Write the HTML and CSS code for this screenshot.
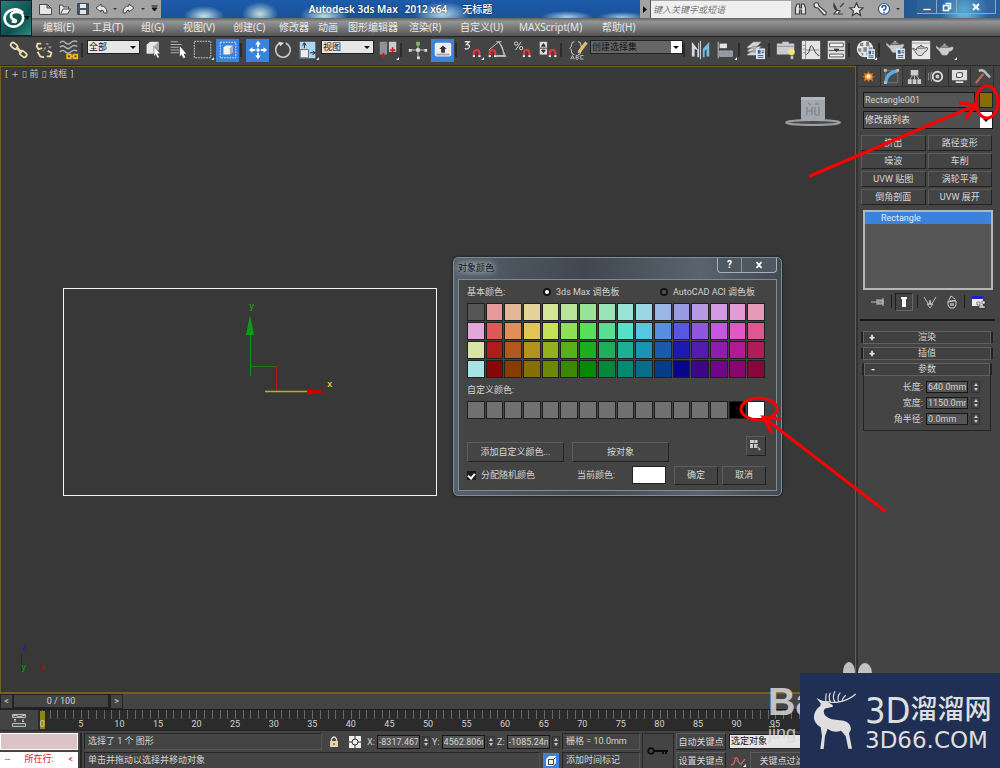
FILE: index.html
```html
<!DOCTYPE html>
<html lang="zh-CN">
<head>
<meta charset="utf-8">
<title>Autodesk 3ds Max 2012 x64 无标题</title>
<link rel="stylesheet" href="styles.css">
</head>
<body>
<svg class="defs" aria-hidden="true">
  <symbol id="magnet" viewBox="0 0 10 10"><path d="M2 9V5a3 3 0 0 1 6 0v4" fill="none" stroke="#e23b3b" stroke-width="2.4"/><path d="M.8 8.8h2.4M6.8 8.8h2.4" stroke="#eee" stroke-width="2"/></symbol>
  <symbol id="teapot" viewBox="0 0 20 14"><path d="M4 5h10q5-2 4 1-1 3-4 3-1 3-3 4H7Q5 12 4 9L0 5V3l4 3zM5 4q4-3 8 0zM8 1h2v2H8z" fill="#c9ced3" stroke="#777" stroke-width=".5"/></symbol>
  <symbol id="panelmark" viewBox="0 0 10 12"><path d="M0 0h10v12H0z" fill="#dde6f0"/><path d="M2 2h3v4H2z" fill="#2968b3"/><path d="M6 3h3M6 5h3M2 8h6M2 10h6" stroke="#456" stroke-width="1"/></symbol>
</svg>
<div class="app">
  <header class="top">
    <button class="app-logo" aria-label="应用程序">
      <svg width="31" height="32" viewBox="0 0 31 32"><path d="M22 11Q16 5 8 9 1 14 5 21q4 5 11 3 7-3 6-10-1-4-6-4-6 0-6 4 0 3 4 4 2 1 0 2-2 0-3-1" fill="none" stroke="#fff" stroke-width="2.600"/><path d="M23 14h6l-3 4z" fill="#031512"/></svg>
    </button>
    <div class="titlebar">
      <div class="quick">
        <svg width="129" height="18" viewBox="0 0 129 18" fill="#e5e7e8" stroke="#44494e" stroke-width="1"><path d="M7.500 4.500h8l4 4v6h-12zM15 4v4h4"/><path d="M27.500 13V5h3l1 2h5v2h2l-3 5h-8zM29 13l2-4h6"/><path d="M45.500 3.500h11v11h-11z" fill="#40566c"/><path d="M48 4h6v4h-6zM48 10h6v4h-6z" stroke="none"/><path d="M64 8l5-4v2q6 0 6 7h-3q0-3-3-3v2z"/><path d="M102 8l-5-4v2q-6 0-6 7h3q0-3 3-3v2z"/><path d="M81 8h4l-2 2zM109 8h4l-2 2z" fill="#333" stroke="none"/><path d="M120 8h5l-2.500 3zM119.500 6h6" fill="#111" stroke="#111"/></svg>
      </div>
      <h1 class="title"><span>Autodesk 3ds Max</span><span>2012 x64</span><span class="docname">无标题</span></h1>
      <div class="infocenter">
        <button class="info-toggle" aria-label="展开"><svg width="5" height="7" viewBox="0 0 5 7"><path d="M0 0l4 3.500L0 7z" fill="#111"/></svg></button>
        <input class="search" type="text" placeholder="键入关键字或短语" aria-label="搜索">
        <svg class="info-icons" width="113" height="18" viewBox="0 0 113 18" fill="#e6e6e6" stroke="#3c3f42" stroke-width="1.200"><path d="M4.500 14V8l1.500-4h2.500v4h2V4H13l1.500 4v6h-4v-4h-2v4z"/><path d="M23 5q0-3 4-2l1 3 7 6q1 3-2 3l-6-7q-4 0-4-3z"/><path d="M43 4q-1 6 6 7l-2 3h-4l3-4zM49 7l4-4M44 14h8"/><path d="M65.500 3l2 4.500 4.500.500-3.500 3 1 4.500-4-2.500-4 2.500 1-4.500-3.500-3 4.500-.500z"/><circle cx="93" cy="9" r="5.500" fill="#fff" stroke="#3b5578"/><path d="M91 8q0-2.500 2-2.500T95 8q0 1-2 2v1M93 12v1.500" fill="none" stroke="#1d54a8" stroke-width="1.500"/><path d="M105 8h4l-2 2z" fill="#333" stroke="none"/></svg>
      </div>
      <div class="winbuttons">
        <button aria-label="最小化"><svg width="10" height="12" viewBox="0 0 10 12"><path d="M1 7.500h8v2H1z" fill="#fff" stroke="#445" stroke-width=".5"/></svg></button>
        <button aria-label="还原"><svg width="10" height="12" viewBox="0 0 10 12"><path d="M3.500 2.500h5v5h-2M1.500 4.500h5v5h-5z" fill="none" stroke="#fff" stroke-width="1.500"/></svg></button>
        <button class="wide" aria-label="关闭"><svg width="10" height="12" viewBox="0 0 10 12"><path d="M2 3l6 6M8 3L2 9" stroke="#fff" stroke-width="2"/></svg></button>
      </div>
    </div>
    <nav class="menubar">
      <button>编辑(E)</button><button>工具(T)</button><button>组(G)</button><button>视图(V)</button><button>创建(C)</button><button>修改器</button><button>动画</button><button>图形编辑器</button><button>渲染(R)</button><button>自定义(U)</button><button>MAXScript(M)</button><button>帮助(H)</button>
    </nav>
  </header>

  <div class="toolbar" role="toolbar">
    <button class="tool" aria-label="选择并链接"><svg viewBox="0 0 24 24"><g fill="none" stroke="#e9d9ae" stroke-width="2"><rect x="3" y="5" width="8" height="5" rx="2.500" transform="rotate(40 7 7)"/><rect x="13" y="14" width="8" height="5" rx="2.500" transform="rotate(40 17 16)"/><path d="M9 9l6 6" stroke-width="3"/></g></svg></button>
    <button class="tool" aria-label="取消链接"><svg viewBox="0 0 24 24"><g fill="none" stroke-width="2"><path d="M10 10L6 11 4 8l1-3 4 0" stroke="#e9d9ae"/><path d="M5 14l3 5 4 1M15 19l4 0 1-4-4-2" stroke="#e9d9ae"/><path d="M14 5l4 1M17 9l3 0M14 9l-3 4" stroke="#8f8f8f" stroke-dasharray="3 1"/></g></svg></button>
    <button class="tool" aria-label="绑定到空间扭曲"><svg viewBox="0 0 24 24"><path d="M2 4q3-3 6 0t6 0 7-1M2 9q3-3 6 0t6 0 7-1M2 14q3-3 6 0t6 0 7-1" fill="none" stroke="#aeb1b4" stroke-width="1.600"/><path d="M10 17h4v4h-4zM17 17h4v4h-4zM13 19h4" fill="none" stroke="#eeb11f" stroke-width="2"/></svg></button>
    <i class="sep"></i>
    <span class="combo"><select aria-label="选择过滤器"><option>全部</option></select></span>
    <button class="tool" aria-label="选择对象"><svg viewBox="0 0 24 24"><path d="M5 6l4-3h9v9l-4 4H5z" fill="#e4e6e8"/><path d="M14 7l4-4v9l-4 4z" fill="#a9adb2"/><path d="M13 8l7 8h-3l2 4-2 1-2-4-2 2z" fill="#fff" stroke="#333" stroke-width=".5"/></svg></button>
    <button class="tool" aria-label="按名称选择"><svg viewBox="0 0 24 24"><path d="M4 3h8M4 6h12M4 9h9M4 12h9M4 15h9" stroke="#b9b9b9"/><path d="M14 8l7 8h-3l2 4-2 1-2-4-2 2z" fill="#fff"/></svg></button>
    <button class="tool" aria-label="矩形选择区域"><svg viewBox="0 0 24 24"><path d="M2.500 2.500h18v18h-18z" fill="none" stroke="#d5d5d5" stroke-dasharray="2 1"/><path d="M24 20v3h-3z" fill="#fff"/></svg></button>
    <button class="tool on" aria-label="窗口/交叉"><svg viewBox="0 0 24 24"><path d="M3.500 3.500h17v17h-17z" fill="none" stroke="#dceaff" stroke-dasharray="2 1"/><path d="M7 9l3-2h7v8l-3 2H7z" fill="#f0f0ec"/><path d="M14 10l3-3v8l-3 2z" fill="#aaa"/></svg></button>
    <i class="sep"></i>
    <button class="tool on" aria-label="选择并移动"><svg viewBox="0 0 24 24"><g fill="#fff"><path d="M12 2l3 4h-2v3h-2V6H9zM12 22l3-4h-2v-3h-2v3H9zM2 12l4-3v2h3v2H6v2zM22 12l-4-3v2h-3v2h3v2z"/><circle cx="12" cy="12" r="1.800"/></g></svg></button>
    <button class="tool" aria-label="选择并旋转"><svg viewBox="0 0 24 24"><path d="M8 5a8 8 0 1 0 7-.500" fill="none" stroke="#c5c5c5" stroke-width="1.800"/><path d="M7 3l6 1-4 4z" fill="#ddd"/></svg></button>
    <button class="tool" aria-label="选择并缩放"><svg viewBox="0 0 24 24"><path d="M3 3h17v18H3z" fill="#a9d8f2"/><path d="M3.500 11.500h9v9h-9z" fill="#eee" stroke="#666"/><path d="M8 10V5M6 7l2-3 2 3M14 15h5M17 13l3 2-3 2" stroke="#112" fill="none"/><path d="M24 20v3h-3z" fill="#fff"/></svg></button>
    <span class="combo gap"><select aria-label="参考坐标系"><option>视图</option></select></span>
    <button class="tool" aria-label="使用轴点中心"><svg viewBox="0 0 24 24"><path d="M3 3h8v14H3z" fill="#8d9299"/><path d="M13 3h8v11h-8z" fill="#c9cdd2"/><path d="M7 15v6M4 18h6M17 9v6M14 12h6" stroke="#d11" stroke-width="1.800"/><path d="M24 20v3h-3z" fill="#fff"/></svg></button>
    <i class="sep"></i>
    <button class="tool" aria-label="选择并操纵"><svg viewBox="0 0 24 24"><path d="M12 4v17M3 12h18" stroke="#ccc"/><path d="M10 10h4v4h-4zM2 11h3v3H2zM19 11h3v3h-3zM11 19h3v3h-3z" fill="#ddd"/><path d="M10 3h4v4h-4z" fill="#7bc25e"/></svg></button>
    <button class="tool on" aria-label="键盘快捷键覆盖切换"><svg viewBox="0 0 24 24"><rect x="3" y="4" width="18" height="15" rx="2" fill="#f1eeea"/><path d="M5 16h14v2H5z" fill="#a5a5a5"/><path d="M12 7l4 4h-2v4h-4v-4H8z" fill="#333"/></svg></button>
    <i class="sep"></i>
    <button class="tool" aria-label="捕捉开关"><svg viewBox="0 0 24 24"><path d="M3 3h5l-3 3q4 0 3 3-2 3-5 1" fill="none" stroke="#ddd" stroke-width="1.400"/><use href="#magnet" x="11" y="10" width="10" height="10"/><path d="M24 20v3h-3z" fill="#fff"/></svg></button>
    <button class="tool" aria-label="角度捕捉"><svg viewBox="0 0 24 24"><path d="M2 12L13 3l7 15H10M12 3q6 4 6 14M10 3h6M8 19h13" fill="none" stroke="#ccc"/><use href="#magnet" x="1" y="10" width="10" height="10"/></svg></button>
    <button class="tool" aria-label="百分比捕捉"><svg viewBox="0 0 24 24"><path d="M10 3L4 12" stroke="#ddd"/><circle cx="4.500" cy="5" r="1.800" fill="none" stroke="#ddd"/><circle cx="10" cy="10" r="1.800" fill="none" stroke="#ddd"/><use href="#magnet" x="11" y="10" width="10" height="10"/></svg></button>
    <button class="tool" aria-label="微调器捕捉"><svg viewBox="0 0 24 24"><path d="M3 3h8v14H3z" fill="#ddd"/><path d="M5 8l2-3 2 3zM5 12l2 3 2-3zM3 10h8" fill="#333" stroke="#333"/><use href="#magnet" x="12" y="10" width="10" height="10"/></svg></button>
    <i class="sep"></i>
    <button class="tool" aria-label="编辑命名选择集"><svg viewBox="0 0 24 24"><path d="M8 3q-3 0-3 3t-2 4q2 1 2 4t3 3M12 3q3 0 3 3t2 4q-2 1-2 4t-3 3" fill="none" stroke="#ddd"/><path d="M4 22l2-4 2 4M5 21h2M10 18v4h2l1-1-1-1 1-1-1-1zM10 20h2M18 18h-3v4h3" fill="none" stroke="#ddd" stroke-width=".8"/><path d="M20 3l2 2-7 9-3 1 1-3z" fill="#f3ba45" stroke="#fff" stroke-width=".5"/></svg></button>
    <span class="combo sets"><select aria-label="命名选择集"><option>创建选择集</option></select></span>
    <i class="sep"></i>
    <button class="tool" aria-label="镜像"><svg viewBox="0 0 24 24"><path d="M2 3l7 9V4h1v16H8V12l-3-1v8H2z" fill="#d5dae0"/><path d="M21 3l-7 8v9h2v-7l2-2v8h3z" fill="#73bce5"/><path d="M11.500 2v20" stroke="#ddd"/></svg></button>
    <button class="tool" aria-label="对齐"><svg viewBox="0 0 24 24"><path d="M3.500 3v18" stroke="#ccc"/><path d="M5 5h8v5H5z" fill="#e5e5e5"/><path d="M5 13h14v6H5z" fill="#8f98a6" stroke="#bbb" stroke-width=".7"/><path d="M24 20v3h-3z" fill="#fff"/></svg></button>
    <i class="sep"></i>
    <button class="tool" aria-label="层管理器"><svg viewBox="0 0 24 24"><g fill="#d4d4d4" stroke="#555" stroke-width=".6"><path d="M2 17l7-5h9l-6 6H3zM2 13l7-5h9l-6 6H3zM2 9l7-6h9l-6 7H3z"/></g><use href="#panelmark" x="12" y="10" width="10" height="12"/></svg></button>
    <i class="sep"></i>
    <button class="tool" aria-label="石墨建模工具"><svg viewBox="0 0 24 24"><path d="M2 5h6V3h7v2h6v12H2z" fill="#c9ccd1"/><path d="M2 8h19" stroke="#8b8f96"/><circle cx="18" cy="14" r="3.500" fill="#ffe27a"/><path d="M17 18h3v4h-3z" fill="#b9bec6"/></svg></button>
    <button class="tool" aria-label="曲线编辑器"><svg viewBox="0 0 24 24"><path d="M2 2h20v20H2z" fill="#e4e4e4"/><path d="M6 2v20M3 7h3M3 11h3M3 15h3M6 12h15" stroke="#888"/><path d="M7 17q3-1 4-7t4 1 6 7" fill="none" stroke="#333"/></svg></button>
    <button class="tool" aria-label="图解视图"><svg viewBox="0 0 24 24"><path d="M3 2h19v20H3z" fill="#dcdcdc"/><path d="M5 4.500h15v4H5zM5 16.500h15v3H5z" fill="#f4f4f4" stroke="#555"/><path d="M4 12.500h17M10 11h5l-2.500 3z" fill="#333" stroke="#444"/></svg></button>
    <i class="sep"></i>
    <button class="tool" aria-label="材质编辑器"><svg viewBox="0 0 24 24"><circle cx="11" cy="11" r="9" fill="#e9e9e9"/><path d="M6 4h3v4H5zM12 3h3l1 5h-4zM3 10h4v4H4zM9 9h4v5H9zM15 9h4v5h-4zM6 15h3v4zM12 15h4v3l-3 1z" fill="#808892"/><use href="#panelmark" x="13" y="11" width="9" height="11"/><path d="M24 20v3h-3z" fill="#fff"/></svg></button>
    <i class="sep"></i>
    <button class="tool" aria-label="渲染设置"><svg viewBox="0 0 24 24"><use href="#teapot" x="1" y="1" width="22" height="15"/><use href="#panelmark" x="12" y="10" width="10" height="12"/></svg></button>
    <button class="tool" aria-label="渲染帧窗口"><svg viewBox="0 0 24 24"><path d="M2 2h20v20H2z" fill="#e8e8e8"/><path d="M2 4.500h20" stroke="#999"/><path d="M7 10h9q4-2 3 1-1 3-3 3l-3 4H9q-2-1-3-4l-3-3v-1l4 2zM8 9q4-3 8 0M11 7h2" fill="#d7dadd" stroke="#555"/></svg></button>
    <button class="tool" aria-label="渲染产品"><svg viewBox="0 0 24 24"><use href="#teapot" x="1" y="4" width="21" height="15"/><path d="M24 20v3h-3z" fill="#fff"/></svg></button>
  </div>

  <main class="main">
    <section class="viewport">
      <p class="vp-label">[ + ▯ 前 ▯ 线框 ]</p>
      <svg class="scene" viewBox="0 0 856 628" width="856" height="628">
        <rect x="63.500" y="222.500" width="373" height="207" fill="none" stroke="#f2f2f2"/>
        <path d="M250.500 310V266" stroke="#0a9c10"/><path d="M250 249l4 20h-8z" fill="#0a9c10"/><path d="M250.500 300.500h26" stroke="#187818"/><path d="M276.500 300v25" stroke="#b51414"/><path d="M265 325.500h42" stroke="#bdb00c" stroke-width="1.500"/><path d="M307 322l21 4-21 3z" fill="#c80000"/>
        <path d="M21.500 588V608" stroke="#1717a8"/><path d="M21 607.500h20" stroke="#8c1818"/>
        <text x="249" y="243" fill="#149a14">y</text><text x="327" y="321" fill="#d6ca12">x</text><text x="21" y="584" fill="#2020c8">z</text><text x="21" y="604" fill="#129012">y</text><text x="40" y="604" fill="#a01414">x</text>
        <ellipse cx="813" cy="56.500" rx="27" ry="2.500" fill="#4a4a4a" stroke="#9b9fa3" stroke-width="2"/><path d="M801 31h24v24h-24z" fill="#a3a7ae"/><path d="M801 31h24v3h-24z" fill="#b4b7bd"/><path d="M807 41v8M812 41v8M807 45h5M815 41v8h4v-8M808 37l3 2M815 38h4" stroke="#777b82" fill="none"/>
      </svg>

      <form class="dialog" onsubmit="return false">
        <header class="dlg-title"><h2>对象颜色</h2><div class="dlg-win"><button type="button">?</button><button type="button" class="x" aria-label="关闭"><svg width="8" height="8" viewBox="0 0 8 8"><path d="M1.500 1l5 6M6.500 1l-5 6" stroke="#fff" stroke-width="1.800"/></svg></button></div></header>
        <div class="dlg-body">
          <div class="modes"><span>基本颜色:</span><label><input type="radio" name="pal" checked>3ds Max 调色板</label><label><input type="radio" name="pal">AutoCAD ACI 调色板</label></div>
          <div class="palette" id="basic"></div>
          <p class="custom-label">自定义颜色:</p>
          <div class="palette custom" id="custom"></div>
          <div class="row actions"><button type="button" class="btn">添加自定义颜色...</button><button type="button" class="btn">按对象</button><button type="button" class="btn pick" aria-label="按颜色选择"><svg width="14" height="14" viewBox="0 0 14 14"><path d="M1 1h4v3H1zM5.500 1h3v3h-3zM1 5h3v4H1zM5 5h4v4H5z" fill="#ccc"/><path d="M8 6l5 5h-2l1 2-3-2z" fill="#aaa" stroke="#333" stroke-width=".5"/></svg></button></div>
          <div class="row confirm"><label class="rand"><input type="checkbox" checked>分配随机颜色</label><span>当前颜色:</span><button type="button" class="current" aria-label="当前颜色"></button><button class="btn ok">确定</button><button type="button" class="btn cancel">取消</button></div>
        </div>
      </form>
    </section>

    <aside class="panel">
      <div class="tabs">
        <button aria-label="创建"><svg viewBox="0 0 18 18"><path d="M9 3l1.500 3.500L14 5l-1 3.500 3 .500-3 1.500 1 3.500-3.500-1.500L9 15l-1.500-2.500L4 14l1-3.500L2 9l3-.500L4 5l3.500 1.500z" fill="#d9701c"/><circle cx="9" cy="9" r="3.500" fill="#f9a13a"/><circle cx="9" cy="9" r="2" fill="#fff5c8"/></svg></button>
        <button class="active" aria-label="修改"><svg viewBox="0 0 18 18"><path d="M2.500 2.500h13v13h-13z" fill="none" stroke="#777"/><path d="M3 15Q4 5 15 3" fill="none" stroke="#58b1ec" stroke-width="3.500"/><path d="M1 1h3v3H1zM14 1h3v3h-3zM1 14h3v3H1z" fill="#bbb"/></svg></button>
        <button aria-label="层次"><svg viewBox="0 0 18 18"><path d="M5 2h8v6H5zM2 12h4v5H2zM7 12h4v5H7zM12 12h4v5h-4z" fill="#c9ccd0"/><path d="M9 8v4M4 12l3-4M14 12l-3-4" stroke="#bbb"/></svg></button>
        <button aria-label="运动"><svg viewBox="0 0 18 18"><circle cx="10" cy="9" r="5" fill="none" stroke="#d4d8dc" stroke-width="2"/><circle cx="10" cy="9" r="2" fill="#ccc"/><path d="M4 4q-3 5 0 10M1 5q-2 4 0 8" fill="none" stroke="#999"/></svg></button>
        <button aria-label="显示"><svg viewBox="0 0 18 18"><path d="M1 2h16v11H1zM5 14h8v2H5z" fill="#dcdfe2"/><path d="M7 5h5v4l-2 1H6V6z" fill="#f8f8f8" stroke="#333"/></svg></button>
        <button aria-label="工具"><svg viewBox="0 0 18 18"><path d="M2 16L10 6" stroke="#b86b5c" stroke-width="2.500"/><path d="M5 3q5-2 8 3l4 4" fill="none" stroke="#bbb" stroke-width="2.500"/></svg></button>
      </div>
      <div class="object-name"><input type="text" value="Rectangle001" aria-label="对象名称"><button class="object-color" aria-label="对象颜色"></button></div>
      <span class="combo modlist"><select aria-label="修改器列表"><option>修改器列表</option></select></span>
      <div class="modbuttons"><button class="btn">挤出</button><button class="btn">路径变形</button><button class="btn">噪波</button><button class="btn">车削</button><button class="btn">UVW 贴图</button><button class="btn">涡轮平滑</button><button class="btn">倒角剖面</button><button class="btn">UVW 展开</button></div>
      <ul class="stack"><li>Rectangle</li></ul>
      <div class="stack-tools">
        <button aria-label="锁定堆栈"><svg viewBox="0 0 16 16"><path d="M1 8h6M7 5v6M8 6h5v4H8zM13 4v8" stroke="#bbb" fill="#888"/></svg></button><i></i>
        <button class="pressed" aria-label="显示最终结果"><svg viewBox="0 0 16 16"><path d="M5 3h6v2h-1v8H6V5H5z" fill="#fff"/></svg></button><i></i>
        <button aria-label="使唯一"><svg viewBox="0 0 16 16"><path d="M2 3l5 8 1-5 1 5 5-8M5 10h6l-3 4z" stroke="#bbb" fill="none"/></svg></button>
        <button aria-label="移除修改器"><svg viewBox="0 0 16 16"><path d="M4 7h8v4l-2 3H6l-2-3zM5 6l2-4 4 3M4 8l8-2" stroke="#ccc" fill="none"/><path d="M6 9h4v3H6z" fill="#999"/></svg></button><i></i>
        <button aria-label="配置修改器集"><svg viewBox="0 0 16 16"><path d="M2 2h11v10H2z" fill="#eee"/><path d="M2 2h11v3H2z" fill="#1c22c9"/><path d="M7 8h3v3H7zM12 7h3v3h-3zM9 12h6v2H9z" fill="#fff" stroke="#222" stroke-width=".6"/></svg></button>
      </div>
      <div class="rollups">
        <button class="rollup"><b>+</b><span>渲染</span></button>
        <button class="rollup"><b>+</b><span>插值</span></button>
        <div class="params">
          <button class="rollup"><b>-</b><span>参数</span></button>
          <div class="param"><label for="len">长度:</label><input id="len" type="text" value="640.0mm"><span class="spin"></span></div>
          <div class="param"><label for="wid">宽度:</label><input id="wid" type="text" value="1150.0mm"><span class="spin"></span></div>
          <div class="param"><label for="rad">角半径:</label><input id="rad" type="text" value="0.0mm"><span class="spin"></span></div>
        </div>
      </div>
    </aside>
  </main>

  <div class="timeslider"><button class="step">&lt;</button><div class="frame">0 / 100</div><button class="step">&gt;</button></div>
  <div class="trackbar">
    <button class="mini" aria-label="打开迷你曲线编辑器"><svg width="16" height="16" viewBox="0 0 16 16"><path d="M1.500 2.500h13v3h-13zM1.500 11.500h13v3h-13z" fill="#555" stroke="#bbb"/><path d="M4 10V7M12 7v3M3 8l1-1 1 1M11 9l1 1 1-1M2 4l3-1 3 2 6-2" stroke="#ccc" fill="none"/></svg></button>
    <div class="track"><div class="ruler"><span class="marker"></span><div class="ticks" id="ticks"></div><div class="numbers" id="numbers"></div></div></div>
  </div>

  <footer class="status">
    <div class="listener"><div class="macro"></div><div class="script"><span>--</span><span>所在行:</span><span>&lt;</span></div></div>
    <div class="prompts">
      <div class="line">
        <div class="cell selection">选择了 1 个 图形</div>
        <button class="ico" aria-label="锁定"><svg width="12" height="14" viewBox="0 0 12 14"><path d="M3.500 7V4q2.500-4 5 0v3" fill="none" stroke="#ddd" stroke-width="1.300"/><path d="M2 6h8v6H2z" fill="#ead5a4"/><path d="M6 8v2" stroke="#333"/></svg></button>
        <button class="ico" aria-label="偏移模式"><svg width="12" height="12" viewBox="0 0 12 12"><path d="M0 0h12v12H0z" fill="#eee"/><circle cx="6" cy="6" r="3" fill="none" stroke="#333"/><path d="M6 0v3M6 9v3M0 6h3M9 6h3" stroke="#333"/></svg></button>
        <label class="coord">X:<input type="text" value="-8317.467mm"><span class="spin"></span></label>
        <label class="coord">Y:<input type="text" value="4562.806mm"><span class="spin"></span></label>
        <label class="coord">Z:<input type="text" value="-1085.24mm"><span class="spin"></span></label>
        <div class="cell side">栅格 = 10.0mm</div>
      </div>
      <div class="line">
        <div class="cell hint">单击并拖动以选择并移动对象</div>
        <button class="iso" aria-label="孤立"><svg width="12" height="12" viewBox="0 0 12 12"><path d="M1 4l3-3h7v7l-3 3H1z" fill="#eee"/><path d="M3.500 4.500h5v5h-5zM8.500 4.500l2-2" fill="none" stroke="#444"/></svg></button>
        <div class="cell side">添加时间标记</div>
      </div>
    </div>
    <button class="setkey" aria-label="设置关键点"><svg width="22" height="10" viewBox="0 0 22 10"><circle cx="4" cy="5" r="2.800" fill="none" stroke="#0c0c0c" stroke-width="1.800"/><path d="M7 5h14M16 5v3M19 5v3" stroke="#0c0c0c" stroke-width="1.800"/></svg></button>
    <div class="keys">
      <div class="line"><button class="btn key">自动关键点</button><span class="combo keysel"><select aria-label="关键点选择"><option>选定对象</option></select></span></div>
      <div class="line"><button class="btn key">设置关键点</button><button class="curve" aria-label="切线"><svg width="18" height="14" viewBox="0 0 18 14"><path d="M2 11q3 0 4-5t3 0 3 4 4-5" fill="none" stroke="#e05a5a" stroke-width="1.300"/><path d="M4 3l9 9" stroke="#778" stroke-width=".7"/><path d="M17 10v3h-3z" fill="#fff"/></svg></button><button class="btn filter">关键点过滤器...</button></div>
    </div>
  </footer>
</div>

<div class="watermark" aria-hidden="true"><svg width="32" height="20" viewBox="0 0 32 20"><ellipse cx="8" cy="12" rx="6" ry="10"/><ellipse cx="24" cy="13" rx="7" ry="10"/></svg><strong>Ba</strong><span>jing</span></div>
<div class="brand">
  <svg width="48" height="62" viewBox="0 0 144 186"><path d="M16 24L34 32 46 34 64 44 66 50 50 54Q40 54 38 64 38 80 62 88L98 92Q120 98 120 118L114 130 123 176 112 176 104 138 90 122Q66 130 50 116L42 138 38 177 28 177 33 138 29 112Q6 98 9 76 13 58 28 48L29 40Z" fill="#dedede"/><path d="M46 34Q68 40 92 34T134 12M60 37Q50 26 58 8M72 36Q62 22 72 4M84 36Q76 22 88 8M92 34Q96 22 104 16M44 32Q44 20 46 10" fill="none" stroke="#dedede" stroke-width="3.500"/></svg>
  <div class="brand-text"><div class="brand-name"><span>3D</span>溜溜网</div><div class="brand-url">3D66.COM</div></div>
</div>
<svg class="notes" width="1000" height="768" viewBox="0 0 1000 768" aria-hidden="true"><g fill="none" stroke="#fb0000" stroke-width="3" stroke-linecap="round"><ellipse cx="987" cy="102" rx="11" ry="16"/><path d="M810 176L976 105M960 103l16 2-10 13"/><ellipse cx="759" cy="409" rx="18" ry="11"/><path d="M885 511L763 417M780 419l-17-2 8 15"/></g></svg>
<script src="app.js"></script>
</body>
</html>
```
FILE: styles.css
```css
* { box-sizing: border-box; }
body { margin: 0; background: #444; color: #d2d2d2; font: 9px/12px Roboto, "Noto Sans CJK SC", sans-serif; overflow: hidden; }
button, input, select { font: inherit; color: inherit; margin: 0; padding: 0; border: 0; border-radius: 0; background: none; min-width: 0; }
h1, h2, p, ul { margin: 0; padding: 0; font: inherit; list-style: none; }
svg { display: block; flex: none; }
.defs { position: absolute; width: 0; height: 0; }
.app { display: flex; flex-direction: column; min-height: 100vh; }

/* title bar and menus */
.top { display: grid; grid-template: 18px 18px / 32px 1fr; font-family: "Noto Sans", "Noto Sans CJK SC", sans-serif; }
.app-logo { grid-row: 1 / 3; background: linear-gradient(135deg, #2b8078, #0e4f4b 60%, #2a8c82); border: 1px solid #123; }
.titlebar { display: flex; background: radial-gradient(ellipse 20px 10px at 172px 16px, #c9e2ea, transparent), radial-gradient(ellipse 18px 12px at 228px 14px, #c3dfdc, transparent), radial-gradient(ellipse 24px 12px at 292px 16px, #b9dcdd, transparent), radial-gradient(ellipse 28px 12px at 410px 14px, #b5dbea, transparent), radial-gradient(ellipse 26px 6px at 535px 17px, #a8cfe8, transparent), radial-gradient(ellipse 24px 5px at 590px 17px, #99c6e2, transparent), linear-gradient(#1d5ba9, #1a529b); }
.quick, .infocenter { background: #a3a3a3; }
.title { flex: 1; display: flex; justify-content: center; gap: 7px; font-size: 10px; line-height: 19px; font-weight: 600; color: #fff; white-space: nowrap; text-shadow: 0 0 2px #123; }
.docname { margin-left: 8px; font-weight: 500; }
.infocenter { display: flex; align-items: center; }
.info-toggle { width: 11px; height: 18px; display: grid; place-items: center; border-right: 1px solid #555; }
.search { width: 140px; height: 17px; background: #efefef; padding-left: 2px; color: #555; }
.search::placeholder { color: #777; font-style: italic; opacity: 1; }
.winbuttons { display: flex; width: 96px; padding: 0 4px 4px 13px; background: radial-gradient(circle at 60px 10px, #6ac9f0, #2a62a0 40%, #23578f); }
.winbuttons button { flex: 1; display: grid; place-items: center; border: 1px solid #8aa8c4; border-width: 0 1px 1px 0; background: #3d6da059; }
.winbuttons .wide { flex: 2; }
.menubar { display: grid; grid-template-columns: 49px 49px 42px 50px 46px 39px 30px 61px 51px 59px 83px auto; justify-content: start; padding-left: 11px; background: linear-gradient(#646464, #949494 20%, #555); font-size: 10px; line-height: 17px; color: #e8e8e8; }
.menubar button { text-align: left; white-space: nowrap; }

/* toolbar */
.toolbar { display: flex; align-items: center; height: 30px; padding: 0 0 2px 6px; background: #444; border-top: 1px solid #222; border-bottom: 1px solid #2b2b2b; }
.tool { width: 25px; height: 25px; flex: none; display: grid; place-items: center; }
.tool svg { width: 22px; height: 22px; }
.tool.on { background: #3b82dc; background-clip: content-box; padding: 1px; }
.sep { width: 5px; height: 14px; flex: none; border-left: 2px solid #2b2b2b; }
.combo { position: relative; display: flex; width: 53px; height: 14px; margin: 0 0 6px 1px; flex: none; background: #e6e6e6; color: #111; border: 1px solid #222; }
.combo.gap { margin-right: 1px; }
.combo select { appearance: none; width: 100%; padding-left: 1px; line-height: 11px; }
.combo::after { content: ""; position: absolute; right: 3px; top: 5px; border: 3px solid transparent; border-top-color: #111; border-bottom: 0; pointer-events: none; }
.combo.sets { width: 93px; margin-left: 0; background: linear-gradient(90deg, #666 80px, #fff 80px); }

/* viewport */
.main { flex: 1; display: flex; }
.viewport { position: relative; flex: 1; background: #383838; border: 2px solid #75601e; border-width: 1px 1px 2px; overflow: hidden; }
.vp-label { padding: 0 4px; font: 9px/14px "DejaVu Sans", "Noto Sans CJK SC", sans-serif; color: #c4c4c4; }
.scene { position: absolute; left: -1px; top: -1px; font: bold 9px "Liberation Mono", monospace; }

/* object colour dialog */
.dialog { position: absolute; left: 452px; top: 190px; width: 329px; padding: 0 4px 4px; border: 1px solid #7e8d98; border-radius: 5px; background: linear-gradient(90deg, #56616b, #404750 40%, #59646e 75%, #424a52); box-shadow: 0 0 3px #111; }
.dlg-title { display: flex; justify-content: space-between; height: 21px; }
.dlg-title h2 { line-height: 20px; color: #111; text-shadow: 0 0 6px #c8d3da, 0 0 6px #c8d3da; }
.dlg-win { display: flex; width: 60px; height: 15px; border: 1px solid #a7b1b9; border-top: 0; border-radius: 0 0 4px 4px; background: #4d5860; font-size: 10px; font-weight: 700; color: #fff; }
.dlg-win button { flex: 2; }
.dlg-win .x { flex: 3; display: grid; place-items: center; border-left: 1px solid #8a959e; }
.dlg-body { border: 1px solid #7d8d97; background: #444; padding: 5px 10px 5px 8px; }
.modes { display: grid; grid-template-columns: 76px 117px 1fr; height: 18px; line-height: 14px; }
.modes label, .rand { display: flex; align-items: center; gap: 5px; height: 14px; white-space: nowrap; }
.modes input { appearance: none; width: 8px; height: 8px; border: 2px solid #151515; border-radius: 50%; background: #555; }
.modes input:checked { background: #fff; }
.palette { display: grid; grid-template-columns: repeat(16, 1fr); grid-auto-rows: 18px; row-gap: 1px; }
.swatch { border: 1px solid #202020; margin-right: 1px; }
.custom-label { padding: 6px 0 5px; }
.row { display: flex; align-items: center; }
.btn { border: 1px solid; border-color: #5c5c5c #222 #222 #5c5c5c; background: #444; color: #d6d6d6; line-height: 12px; text-align: center; white-space: nowrap; }
.actions { padding: 17px 0 0; gap: 8px; align-items: flex-end; }
.actions .btn { width: 97px; height: 20px; }
.actions .pick { width: 20px; margin: 0 0 6px auto; display: grid; place-items: center; }
.confirm { padding-top: 3px; height: 23px; }
.rand { width: 110px; }
.rand input { appearance: none; width: 9px; height: 9px; background: #1c1c1c; display: grid; place-items: center; }
.rand input:checked::after { content: ""; width: 3px; height: 5px; border: solid #fff; border-width: 0 2px 2px 0; transform: rotate(40deg); }
.current { width: 34px; height: 18px; margin-left: auto; background: #fff; border: 1px solid #222; }
.ok, .cancel { width: 44px; height: 19px; margin-left: 8px; }
.cancel { margin-left: 4px; }

/* command panel */
.panel { width: 144px; padding: 1px 7px 0 5px; border-left: 2px solid #333; }
.tabs { display: grid; grid-template-columns: repeat(6, 1fr); height: 20px; margin: 0 -1px 5px -5px; }
.tabs button { display: grid; place-items: center; border: 1px solid #303030; border-width: 0 1px 1px 0; }
.tabs .active { background: #4c4c4c; }
.tabs svg { width: 17px; height: 17px; }
.object-name { display: flex; gap: 4px; height: 16px; margin-bottom: 3px; }
.object-name input { flex: 1; background: #555; border: 1px solid #181818; padding-left: 1px; }
.object-color { width: 14px; background: #876d06; border: 1px solid #222; }
.combo.modlist { width: auto; height: 18px; margin: 0 0 6px; color: #ddd; background: linear-gradient(90deg, #505050 116px, #fff 116px); border-color: #181818; }
.modlist::after { top: 7px; }
.modbuttons { display: grid; grid-template-columns: 1fr 1fr; grid-auto-rows: 16px; gap: 2px; margin: 0 1px 5px -2px; }
.stack { height: 80px; border: 2px solid #b4b6b8; background: #555; }
.stack li { height: 12px; padding-left: 16px; background: #3b82dc; color: #e0eaff; }
.stack-tools { display: flex; justify-content: space-between; align-items: center; height: 23px; padding: 0 6px; }
.stack-tools button { width: 18px; height: 18px; padding: 1px; }
.stack-tools .pressed { border: 1px solid; border-color: #1f1f1f #666 #666 #1f1f1f; padding: 0; }
.stack-tools i { width: 1px; height: 13px; background: #1c1c1c; }
.rollups { margin: 6px -2px 0 -3px; padding: 10px 4px 0 3px; border-top: 2px solid #161616; display: flex; flex-direction: column; gap: 3px; }
.rollup { display: grid; grid-template-columns: 10px 1fr 10px; width: 100%; height: 13px; padding: 0 3px; border: 1px solid #616161; line-height: 11px; background: #404040; text-align: center; box-shadow: -3px 0 0 -1px #222, 3px 0 0 -1px #222; }
.rollup b { font-size: 10px; color: #fff; }
.params { border: 1px solid #242424; border-top: 0; padding-bottom: 3px; }
.param { display: grid; grid-template-columns: 1fr 42px 9px; gap: 3px; align-items: center; height: 16px; padding-right: 10px; text-align: right; }
.param:nth-child(2) { margin-top: 3px; }
.param input, .coord input { height: 12px; width: 42px; background: #555; border: 1px solid #161616; padding: 0 1px; line-height: 10px; }
.spin { display: flex; flex-direction: column; justify-content: center; align-items: center; gap: 2px; width: 9px; height: 12px; border: 1px solid #333; }
.spin::before, .spin::after { content: ""; border: 2px solid transparent; }
.spin::before { border-top: 0; border-bottom: 3px solid #c6c6c6; }
.spin::after { border-bottom: 0; border-top: 3px solid #c6c6c6; }

/* time controls */
.timeslider { display: flex; height: 15px; background: #444; line-height: 13px; }
.step { width: 13px; border: 1px solid #252525; }
.frame { width: 97px; border: 1px solid #222; border-right-width: 2px; border-bottom-width: 2px; text-align: center; }
.trackbar { display: flex; height: 21px; }
.mini { width: 38px; display: grid; place-items: center; border-top: 1px solid #222; }
.track { flex: 1; padding: 0 186px 0 4px; background: #2b2b2b; border-top: 1px solid #1b1b1b; }
.ruler { position: relative; }
.ticks { display: grid; grid-template-columns: repeat(100, 1fr); height: 9px; }
.ticks i { border-left: 1px solid #666; }
.numbers { position: relative; display: grid; grid-template-columns: repeat(21, 1fr); margin: 0 -19px; text-align: center; line-height: 11px; }
.marker { position: absolute; left: -2px; top: 1px; width: 5px; height: 18px; background: #8e8519; }

/* status bar */
.status { display: grid; grid-template-columns: 78px 560px 32px 1fr; height: 38px; gap: 0 2px; padding-top: 2px; border-top: 1px solid #262626; }
.listener { display: grid; grid-template-rows: 17px 1fr; gap: 2px; }
.macro { background: #dcc3c6; border: 1px solid #fff; }
.script { display: flex; justify-content: space-between; padding: 1px 5px; background: #fff; color: #e01010; white-space: nowrap; }
.prompts, .keys { display: grid; grid-template-rows: 17px 17px; gap: 2px; border-left: 2px solid #262626; padding-left: 2px; min-width: 0; }
.keys { border: 0; padding: 0; }
.line { display: flex; align-items: center; gap: 3px; min-width: 0; }
.cell { height: 17px; border: 1px solid; border-color: #252525 #555 #555 #252525; padding-left: 3px; line-height: 15px; white-space: nowrap; }
.selection, .hint { flex: 1; }
.side { width: 78px; }
.ico { width: 18px; display: grid; place-items: center; }
.coord { display: flex; align-items: center; gap: 2px; width: 62px; }
.coord input { width: 43px; flex: none; height: 14px; }
.coord .spin { flex: none; width: 8px; }
.iso { width: 16px; height: 16px; background: #3b82dc; display: grid; place-items: center; }
.setkey { display: grid; place-items: center; border: 1px solid #292929; }
.key { width: 50px; height: 17px; }
.keysel { width: 120px; height: 15px; margin: 0; }
.curve { width: 18px; }
.filter { height: 17px; width: 80px; }

/* overlays */
.watermark { position: absolute; right: 125px; bottom: 20px; width: 107px; height: 88px; overflow: hidden; color: #d8d8d8; opacity: .85; font-family: "Liberation Sans", sans-serif; }
.watermark svg { margin-left: 73px; fill: currentColor; }
.watermark strong { display: block; font-size: 38px; line-height: 44px; }
.watermark span { display: block; font-size: 18px; line-height: 18px; }
.brand { position: absolute; right: 0; bottom: 0; display: flex; width: 200px; height: 95px; padding: 17px 0 0 11px; gap: 6px; background: #203055; color: #dedede; }
.brand-text { white-space: nowrap; }
.brand-name { display: flex; align-items: center; height: 40px; font-size: 27px; font-weight: 500; }
.brand-name span { font: 36px "DejaVu Sans Condensed", "DejaVu Sans", sans-serif; }
.brand-url { font: 23px/20px "DejaVu Sans", sans-serif; }
.notes { position: absolute; left: 0; top: 0; pointer-events: none; }
```
FILE: app.js
```js
const basic = [
  "555555 e49a9a e4b79a e4d49a d6e49a b9e49a 9ae49a 9ae4b8 9ae4d6 9ad6e4 9ab8e4 9a9ae4 b89ae4 d49ae4 e49ad6 e49ab8",
  "e4a6d8 e05757 e08f57 e0c657 c6e057 8fe057 57e057 57e08f 57e0c6 57c6e0 578fe0 5757e0 8f57e0 c657e0 e057c6 e0578f",
  "d8e4a6 b01b1b b0591b b0941b 94b01b 59b01b 1bb01b 1bb059 1bb094 1b94b0 1b59b0 1b1bb0 541bb0 901bb0 b01b94 b01b59",
  "a6e4e4 870606 873c06 876f06 6f8706 3c8706 068706 06873c 06876f 066f87 063c87 060687 3c0687 6f0687 87066f 87063c"
].join(" ").split(" ");
const custom = Array(14).fill("707070").concat("000000", "ffffff");

function fill(id, colors) {
  const box = document.getElementById(id);
  colors.forEach((c) => {
    const b = document.createElement("button");
    b.type = "button";
    b.className = "swatch";
    b.style.background = "#" + c;
    b.setAttribute("aria-label", "#" + c);
    box.append(b);
  });
}
fill("basic", basic);
fill("custom", custom);

const ticks = document.getElementById("ticks");
for (let i = 0; i < 100; i++) ticks.append(document.createElement("i"));
const numbers = document.getElementById("numbers");
for (let i = 0; i < 100; i += 5) {
  const s = document.createElement("span");
  s.textContent = i;
  numbers.append(s);
}
```
